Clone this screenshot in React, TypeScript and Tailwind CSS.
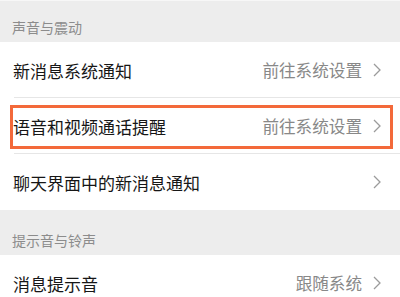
import React from "react";

const Chevron = () => (
  <svg width="8" height="14" viewBox="0 0 8 14" className="ml-[11px] shrink-0">
    <polyline points="1,1 7,7 1,13" fill="none" stroke="#9b9b9b" strokeWidth="1.3" />
  </svg>
);

const Row = ({ title, value, last }: { title: string; value?: string; last?: boolean }) => (
  <div className="relative flex h-[56px] items-center bg-white pl-[13px] pr-[19px]">
    <span className="flex-1 text-[17px] text-[#161616] leading-none">{title}</span>
    {value && <span className="text-[16.6px] text-[#888888] leading-none">{value}</span>}
    <Chevron />
    {!last && <div className="absolute bottom-0 left-[14px] right-0 h-px bg-[#e6e6e6]" />}
  </div>
);

export default function App() {
  return (
    <div
      className="relative h-[297px] w-[400px] overflow-hidden bg-[#ededed]"
      style={{ fontFamily: '"Noto Sans CJK SC", "Noto Sans", sans-serif' }}
    >
      <div className="h-px bg-[#f7f7f7]" />
      <div className="flex h-[41px] items-end bg-[#ededed] pl-[12px] pb-[8px]">
        <span className="text-[14px] text-[#8c8c8c] leading-none">声音与震动</span>
      </div>
      <Row title="新消息系统通知" value="前往系统设置" />
      <Row title="语音和视频通话提醒" value="前往系统设置" />
      <Row title="聊天界面中的新消息通知" last />
      <div className="flex h-[45px] items-end bg-[#ededed] pl-[12px] pb-[8px]">
        <span className="text-[14px] text-[#8c8c8c] leading-none">提示音与铃声</span>
      </div>
      <Row title="消息提示音" value="跟随系统" last />
      <div className="pointer-events-none absolute left-[10px] top-[105px] h-[44px] w-[383px] border-[3px] border-[#f3693a]" />
    </div>
  );
}
